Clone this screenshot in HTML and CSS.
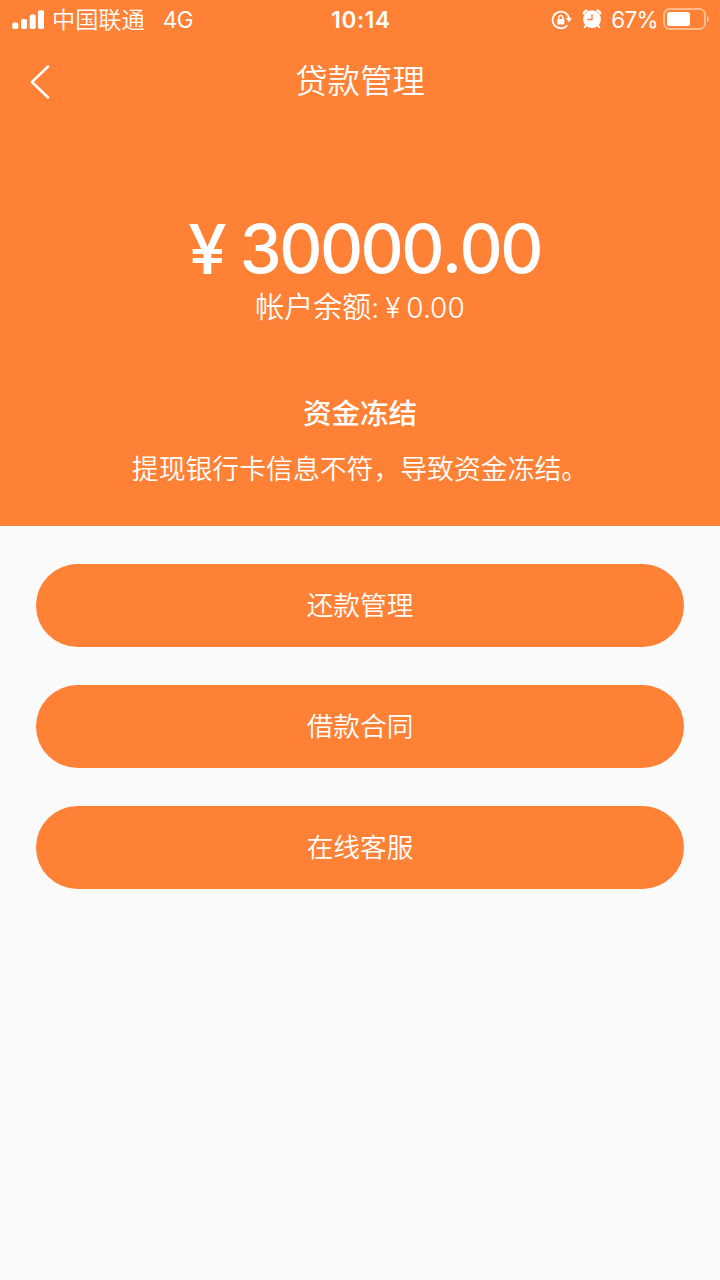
FILE: index.html
```html
<!DOCTYPE html>
<html lang="zh-CN">
<head>
<meta charset="utf-8">
<title>贷款管理</title>
<link rel="stylesheet" href="styles.css">
</head>
<body>
<header class="hero">
  <div class="status">
    <div class="status-left">
      <svg class="signal" width="33" height="21" viewBox="0 0 33 21" fill="#fff"><rect x="0.3" y="13.5" width="6" height="6.5" rx="1.8"/><rect x="9" y="10" width="6" height="10" rx="1.8"/><rect x="17.7" y="5.5" width="6" height="14.5" rx="1.8"/><rect x="26" y="1.3" width="6" height="18.7" rx="1.8"/></svg>
      <span class="carrier">中国联通</span>
      <span class="network">4G</span>
    </div>
    <span class="clock">10:14</span>
    <div class="status-right">
      <svg class="lock" width="22" height="20" viewBox="0 0 22 20" fill="none" stroke="#fff"><path d="M15.8 15.8A8.3 8.3 0 1 1 18 8" stroke-width="1.8" stroke-linecap="round"/><path d="M14.8 8.1h6.2l-3.1 4.1z" fill="#fff" stroke="none"/><rect x="6.3" y="9" width="7" height="5.6" rx="0.6" fill="#fff" stroke="none"/><path d="M7.8 9.3V7.5a2 2 0 0 1 4 0v1.8" stroke-width="1.3"/></svg>
      <svg class="alarm" width="20" height="20" viewBox="0 0 20 20"><g fill="none" stroke="#fff" stroke-linecap="round"><path d="M1.8 4.2Q2.3 2.2 4.6 1.6M18.2 4.2Q17.7 2.2 15.4 1.6" stroke-width="2.4"/><path d="M4.2 16.4l-1.5 1.8M15.8 16.4l1.5 1.8" stroke-width="2"/></g><circle cx="10" cy="10.2" r="8.9" fill="#fff"/><path d="M10 5v5.5H5.3" fill="none" stroke="#ff8136" stroke-width="1.3"/></svg>
      <span class="percent">67%</span>
      <svg class="battery" width="47" height="22" viewBox="0 0 47 22"><rect x="1" y="1" width="41" height="20" rx="5.5" fill="none" stroke="#fff" stroke-opacity=".45" stroke-width="2"/><rect x="4" y="4" width="23" height="14" rx="2.5" fill="#fff"/><path d="M44 7.5q2.2 1 2.2 3.5t-2.2 3.5z" fill="#fff" fill-opacity=".45"/></svg>
    </div>
  </div>
  <nav class="navbar">
    <svg class="back" width="20" height="34" viewBox="0 0 20 34" fill="none" stroke="#fff" stroke-width="2.5" stroke-linecap="round" stroke-linejoin="round"><path d="M18 1.5L2 17l16 15.5"/></svg>
    <h1 class="title">贷款管理</h1>
  </nav>
  <div class="amount"><span class="yen">¥</span><span class="digits">30000.00</span></div>
  <div class="balance"><span>帐户余额</span><span class="balance-value">:<span class="small-yen">¥</span>0.00</span></div>
  <h2 class="state">资金冻结</h2>
  <p class="reason">提现银行卡信息不符，导致资金冻结。</p>
</header>
<main class="actions">
  <button class="action">还款管理</button>
  <button class="action">借款合同</button>
  <button class="action">在线客服</button>
</main>
</body>
</html>
```
FILE: styles.css
```css
* { box-sizing: border-box; }
body {
  margin: 0;
  min-height: 1280px;
  background: #fafafa;
  color: #fff;
  font-family: Inter, "Noto Sans CJK SC", sans-serif;
}
h1, h2, p { margin: 0; }
svg { display: block; flex: none; }
.hero { height: 526px; background: #ff8136; overflow: hidden; }
.status {
  display: grid;
  grid-template-columns: 1fr auto 1fr;
  align-items: center;
  height: 40px;
  padding: 0 10px 0 12px;
  font-size: 23px;
  line-height: 40px;
}
.status-left, .status-right { display: flex; align-items: center; }
.status-right { justify-content: flex-end; }
.signal { margin-top: -2px; }
.carrier { margin-left: 7px; font-size: 23.2px; font-weight: 350; }
.network { margin-left: 18px; font-size: 22.5px; font-weight: 400; letter-spacing: -0.5px; }
.clock { font-size: 22.5px; font-weight: 600; letter-spacing: 0.7px; }
.lock { margin-right: 9px; }
.alarm { margin-top: -3px; }
.percent { margin-left: 9px; font-size: 22.5px; font-weight: 400; letter-spacing: -0.7px; }
.battery { margin-left: 5px; margin-top: -2px; }
.navbar {
  display: grid;
  grid-template-columns: 60px 1fr 60px;
  align-items: center;
  height: 84px;
}
.back { margin: -1px 0 0 30px; }
.title { font-size: 32.4px; font-weight: 350; line-height: 84px; text-align: center; }
.amount {
  display: flex;
  justify-content: center;
  margin-top: 85px;
  padding-left: 9px;
  font-size: 67px;
  font-weight: 500;
  line-height: 80px;
  letter-spacing: -2.7px;
}
.yen { margin-right: 16px; font-size: 69px; }
.digits { letter-spacing: -2.6px; font-kerning: none; }
.balance { display: flex; justify-content: center; height: 38px; font-size: 29px; font-weight: 350; line-height: 38px; }
.balance-value { font-size: 28px; font-weight: 350; }
.small-yen { margin: 0 6px; }
.state { margin-top: 67px; font-size: 28.5px; font-weight: 500; line-height: 40px; text-align: center; }
.reason { margin-top: 15px; font-size: 26.85px; font-weight: 350; line-height: 40px; text-align: center; }
.actions { display: flex; flex-direction: column; gap: 38.5px; padding: 38px 36px; }
.action {
  height: 82.5px;
  border: 0;
  border-radius: 42px;
  background: #ff8136;
  color: #fff;
  font: 350 26.7px/80px Inter, "Noto Sans CJK SC", sans-serif;
}
```
